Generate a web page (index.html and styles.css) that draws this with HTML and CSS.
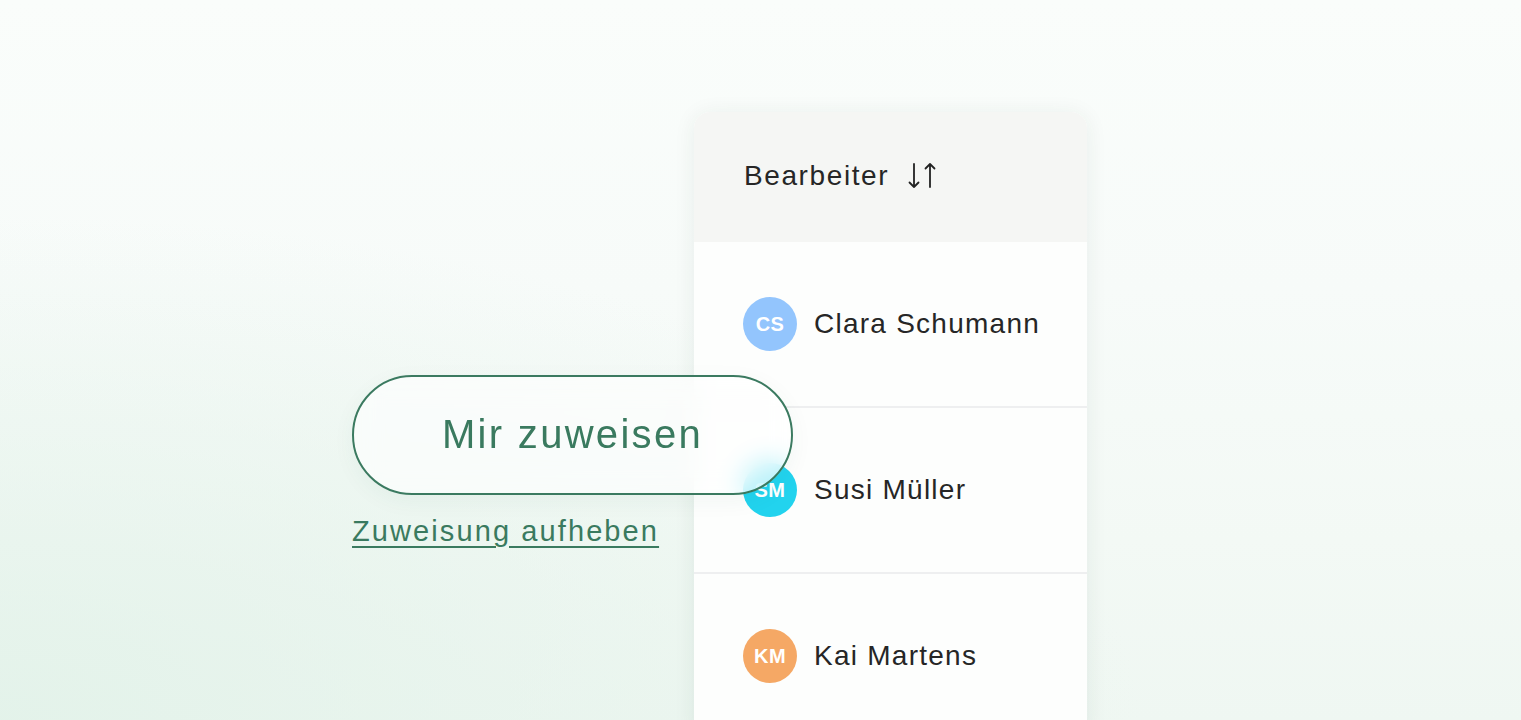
FILE: index.html
```html
<!DOCTYPE html>
<html lang="de">
<head>
<meta charset="utf-8">
<title>Bearbeiter</title>
<link rel="stylesheet" href="styles.css">
</head>
<body>
<main class="stage">
  <div class="actions">
    <button class="assign-btn" type="button">Mir zuweisen</button>
    <a class="unassign-link" href="#">Zuweisung aufheben</a>
  </div>
  <section class="card">
    <header class="card-head">
      <span class="head-label">Bearbeiter</span>
      <svg class="sort-icon" width="32" height="30" viewBox="0 0 32 30" aria-hidden="true">
        <path d="M8 3 V26 M3.5 21.5 L8 26 L12.5 21.5" fill="none" stroke="#222" stroke-width="1.8" stroke-linecap="round" stroke-linejoin="round"/>
        <path d="M24 26 V3 M19.5 7.5 L24 3 L28.5 7.5" fill="none" stroke="#222" stroke-width="1.8" stroke-linecap="round" stroke-linejoin="round"/>
      </svg>
    </header>
    <div class="row">
      <span class="avatar avatar-blue">CS</span>
      <span class="name">Clara Schumann</span>
    </div>
    <div class="row">
      <span class="avatar avatar-cyan">SM</span>
      <span class="name">Susi Müller</span>
    </div>
    <div class="row">
      <span class="avatar avatar-orange">KM</span>
      <span class="name">Kai Martens</span>
    </div>
  </section>
</main>
</body>
</html>
```

FILE: styles.css
```css
html, body {
  margin: 0;
  padding: 0;
  height: 100%;
}

body {
  overflow: hidden;
  font-family: "Liberation Sans", Arial, sans-serif;
  background:
    radial-gradient(ellipse 75% 70% at 0% 100%, rgba(226, 242, 233, 0.9), rgba(226, 242, 233, 0) 100%),
    linear-gradient(180deg, #fafdfb 0%, #f7fbf9 40%, #f3f9f5 75%, #eff7f2 100%);
}

.stage {
  display: flex;
  align-items: flex-start;
  padding: 112px 0 0 352px;
  height: 720px;
  box-sizing: border-box;
}

.actions {
  position: relative;
  z-index: 2;
  width: 441px;
  margin-top: 263px;
  margin-right: -99px;
  display: flex;
  flex-direction: column;
  align-items: flex-start;
}

.assign-btn {
  width: 441px;
  height: 120px;
  box-sizing: border-box;
  border: 2px solid #3b7a60;
  border-radius: 60px;
  background: rgba(255, 255, 255, 0.62);
  -webkit-backdrop-filter: blur(14px);
  backdrop-filter: blur(14px);
  box-shadow: 0 6px 22px rgba(40, 90, 70, 0.05);
  color: #3a7a5f;
  font-family: "Liberation Sans", Arial, sans-serif;
  font-size: 40px;
  letter-spacing: 2.3px;
  display: flex;
  align-items: center;
  justify-content: center;
  padding: 0 0 2px 0;
  cursor: pointer;
}

.unassign-link {
  margin-top: 20px;
  font-size: 29px;
  line-height: 33px;
  letter-spacing: 2.1px;
  color: #3a7a5f;
  text-decoration: underline;
  text-decoration-thickness: 2px;
  text-underline-offset: 5px;
}

.card {
  width: 393px;
  flex-shrink: 0;
  background: #ffffff;
  border-radius: 16px 16px 0 0;
  box-shadow: 0 2px 22px rgba(30, 60, 45, 0.07);
  overflow: hidden;
}

.card-head {
  height: 130px;
  background: #f5f6f4;
  display: flex;
  align-items: center;
  padding: 0 0 2px 50px;
  box-sizing: border-box;
  gap: 17px;
}

.head-label {
  font-size: 28px;
  letter-spacing: 1.6px;
  color: #262626;
}

.sort-icon {
  display: block;
  margin-top: -1px;
}

.row {
  height: 164px;
  display: flex;
  align-items: center;
  padding-left: 49px;
  gap: 17px;
  background: #fdfefd;
}

.row + .row {
  border-top: 2px solid #eeeff0;
}

.avatar {
  width: 54px;
  height: 54px;
  border-radius: 50%;
  display: flex;
  align-items: center;
  justify-content: center;
  color: #ffffff;
  font-weight: 700;
  font-size: 20px;
  letter-spacing: 0.4px;
  flex-shrink: 0;
}

.avatar-blue { background: #93c5fd; }
.avatar-cyan { background: #22d3ee; }
.avatar-orange { background: #f5a865; }

.name {
  font-size: 28px;
  letter-spacing: 1.25px;
  color: #262626;
}
```
